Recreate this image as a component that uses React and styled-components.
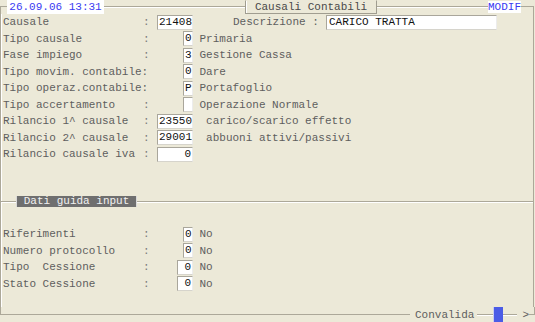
import React from 'react'
import styled, { createGlobalStyle } from 'styled-components'

const Global = createGlobalStyle`
  html, body {
    margin: 0;
    padding: 0;
    background: #ece9d8;
  }
`

const Screen = styled.div`
  width: 535px;
  height: 322px;
  background: #ece9d8;
  font-family: 'Liberation Mono', 'Courier New', monospace;
  font-size: 11px;
  color: #5e5e5e;
  overflow: hidden;
`
const Frame = styled.div`
  width: 534px;
  height: 322px;
  display: flex;
  flex-direction: column;
`
const Bar = styled.div`
  display: flex;
  align-items: center;
  height: ${(p) => p.$h}px;
  flex: none;
  white-space: pre;
`
const Rule = styled.div`
  flex: none;
  width: ${(p) => p.$w}px;
  height: 0;
  border-top: 1px solid #aca899;
  border-bottom: 1px solid #fff;
  margin-left: ${(p) => p.$ml || 0}px;
`
const Edge = styled.div`
  flex: none;
  box-sizing: border-box;
  width: ${(p) => p.$w}px;
  height: 8px;
  align-self: ${(p) => (p.$at === 'top' ? 'flex-end' : 'flex-start')};
  border-color: #aca899;
  border-style: solid;
  border-width: ${(p) =>
    `${p.$at === 'top' ? 1 : 0}px ${p.$side === 'right' ? 1 : 0}px ${p.$at === 'bottom' ? 1 : 0}px ${
      p.$side === 'left' ? 1 : 0
    }px`};
`
const Stamp = styled.div`
  flex: none;
  width: ${(p) => p.$w}px;
  height: ${(p) => p.$h}px;
  align-self: flex-start;
  margin-top: ${(p) => p.$mt || 0}px;
  background: #fff;
  color: #3a3af2;
  text-align: center;
  line-height: ${(p) => p.$h}px;
`
const TitleTab = styled.div`
  flex: none;
  box-sizing: border-box;
  width: 132px;
  height: 14px;
  align-self: flex-start;
  border: 1px solid #a09d90;
  border-top-color: #ece9d8;
  box-shadow: inset 1px 0 #fff;
  color: #4a4a4a;
  text-align: center;
  line-height: 12px;
`
const Body = styled.div`
  flex: 1;
  border-left: 1px solid #aca899;
  border-right: 1px solid #aca899;
  box-shadow: inset 1px 0 #fff;
`
const Row = styled.div`
  display: flex;
  align-items: center;
  height: 16.5px;
  white-space: pre;
`
const Label = styled.span`
  flex: none;
  box-sizing: border-box;
  width: ${(p) => p.$w || 142}px;
  padding-left: ${(p) => (p.$w ? 0 : 2)}px;
  margin-left: ${(p) => p.$ml || 0}px;
`
const Colon = styled.span`
  flex: none;
  width: 7px;
  color: #7a7a7a;
`
const Slot = styled.div`
  flex: none;
  width: 43px;
  display: flex;
  justify-content: flex-end;
`
const Field = styled.div`
  flex: none;
  box-sizing: border-box;
  width: ${(p) => p.$w}px;
  height: 15px;
  margin-left: ${(p) => p.$ml || 0}px;
  background: #fff;
  border: 1px solid;
  border-color: #a9a69b #ececec #d6d4cc #a9a69b;
  color: #111;
  text-align: ${(p) => (p.$left ? 'left' : 'right')};
  padding: 0 ${(p) => (p.$left ? 2 : 1)}px;
  line-height: 13px;
  overflow: hidden;
`
const Desc = styled.span`
  margin-left: 6.5px;
`
const SectionHead = styled.div`
  display: flex;
  align-items: center;
  height: 11px;
  margin: 33.5px 0 18.75px;
`
const SectionTab = styled.div`
  flex: none;
  box-sizing: border-box;
  width: 121px;
  height: 11px;
  background: #6f6f6f;
  border-left: 1px solid #d9d9d9;
  border-right: 1px solid #d9d9d9;
  color: #f2f2f2;
  text-align: center;
  line-height: 10px;
  white-space: pre;
`
const Grow = styled.div`
  flex: 1;
  height: 0;
  border-top: 1px solid #aca899;
  border-bottom: 1px solid #fff;
`
const Caption = styled.span`
  flex: none;
  margin-left: ${(p) => p.$ml || 0}px;
  color: #5e5e5e;
`
const Cursor = styled.div`
  flex: none;
  width: 9px;
  height: 15px;
  background: #4b5ce6;
  border-left: 1px solid #c8ccf0;
`

const mainRows = [
  { label: 'Causale', value: '21408', w: 36, descr: true },
  { label: 'Tipo causale', value: '0', w: 10, text: 'Primaria' },
  { label: 'Fase impiego', value: '3', w: 10, text: 'Gestione Cassa' },
  { label: 'Tipo movim. contabile', colon: false, value: '0', w: 10, text: 'Dare' },
  { label: 'Tipo operaz.contabile', colon: false, value: 'P', w: 10, text: 'Portafoglio' },
  { label: 'Tipo accertamento', value: '', w: 10, text: 'Operazione Normale' },
  { label: 'Rilancio 1^ causale', value: '23550', w: 36, text: ' carico/scarico effetto' },
  { label: 'Rilancio 2^ causale', value: '29001', w: 36, text: ' abbuoni attivi/passivi' },
  { label: 'Rilancio causale iva', value: '0', w: 36, text: '' },
]

const guideRows = [
  { label: 'Riferimenti', value: '0', w: 10, text: 'No' },
  { label: 'Numero protocollo', value: '0', w: 10, text: 'No' },
  { label: 'Tipo  Cessione', value: '0', w: 16, text: 'No' },
  { label: 'Stato Cessione', value: '0', w: 16, text: 'No' },
]

function FormRow({ row }) {
  const noColon = row.colon === false
  return (
    <Row>
      <Label>{noColon ? row.label + ':' : row.label}</Label>
      <Colon>{noColon ? ' ' : ':'}</Colon>
      <Slot>
        <Field $w={row.w}>{row.value}</Field>
      </Slot>
      {row.descr ? (
        <>
          <Label $w={86} $ml={40}>
            Descrizione :
          </Label>
          <Field $w={171} $ml={7} $left>
            CARICO TRATTA
          </Field>
        </>
      ) : (
        row.text && <Desc>{row.text}</Desc>
      )}
    </Row>
  )
}

export default function App() {
  return (
    <Screen>
      <Global />
      <Frame>
        <Bar $h={14}>
          <Edge $w={7} $side="left" $at="top" />
          <Stamp $w={97} $h={14}>
            26.09.06 13:31
          </Stamp>
          <Rule $w={141} />
          <TitleTab>Causali Contabili</TitleTab>
          <Rule $w={111} />
          <Stamp $w={33} $h={12} $mt={1}>
            MODIF
          </Stamp>
          <Edge $w={13} $side="right" $at="top" />
        </Bar>
        <Body>
          {mainRows.map((r) => (
            <FormRow key={r.label} row={r} />
          ))}
          <SectionHead>
            <Rule $w={15} />
            <SectionTab>Dati guida input</SectionTab>
            <Grow />
          </SectionHead>
          {guideRows.map((r) => (
            <FormRow key={r.label} row={r} />
          ))}
        </Body>
        <Bar $h={15}>
          <Edge $w={410} $side="left" $at="bottom" />
          <Caption $ml={5}>Convalida</Caption>
          <Rule $w={16} $ml={3} />
          <Cursor />
          <Rule $w={14} />
          <Caption $ml={5}>&gt;</Caption>
          <Edge $w={6} $side="right" $at="bottom" />
        </Bar>
      </Frame>
    </Screen>
  )
}
